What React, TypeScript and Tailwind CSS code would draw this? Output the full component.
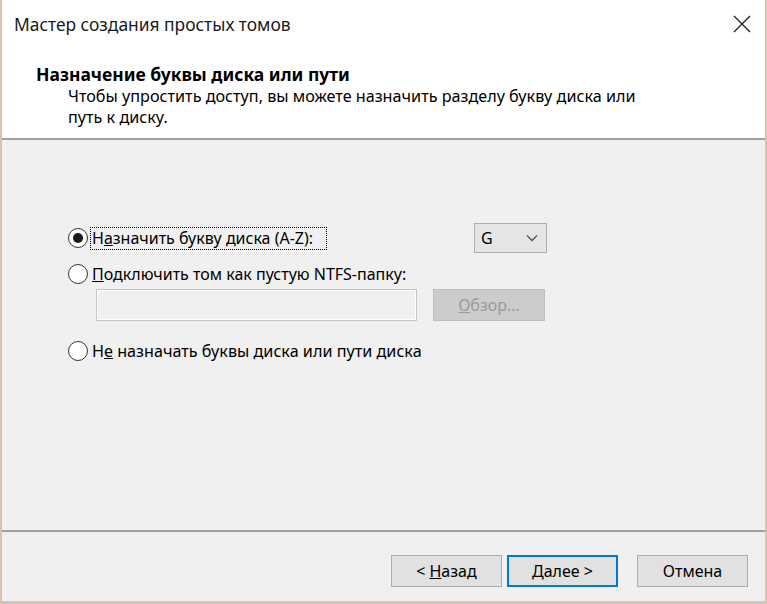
import React from 'react';

const font = { fontFamily: '"Noto Sans", "Open Sans", sans-serif' };

const Radio: React.FC<{ checked?: boolean }> = ({ checked }) => (
  <span className="w-[20px] h-[20px] rounded-full border-[1.5px] border-[#333333] bg-white flex items-center justify-center shrink-0">
    {checked && <span className="w-[10px] h-[10px] rounded-full bg-[#1a1a1a]" />}
  </span>
);

const Btn: React.FC<{ children: React.ReactNode; primary?: boolean; className?: string }> = ({ children, primary, className }) => (
  <button
    className={
      'h-[32px] w-[111px] bg-[#e1e1e1] text-[16px] text-black flex items-center justify-center ' +
      (primary ? 'border-2 border-[#0078d7]' : 'border border-[#adadad]') +
      ' ' + (className || '')
    }
  >
    {children}
  </button>
);

export default function App() {
  return (
    <div style={font} className="w-[767px] h-[604px] flex flex-col border-x-2 border-b-[3px] border-[#dcc1ab] bg-[#f0f0f0] text-black overflow-hidden">
      {/* header */}
      <div className="bg-white h-[138px] flex flex-col shrink-0">
        <div className="h-[48px] flex items-center justify-between pl-[12px] pr-[14px]">
          <span className="text-[17.4px] text-[#1a1a1a]">Мастер создания простых томов</span>
          <svg width="18" height="18" viewBox="0 0 18 18">
            <path d="M1 1 L17 17 M17 1 L1 17" stroke="#222" strokeWidth="1.3" />
          </svg>
        </div>
        <div className="pl-[34px] mt-[15px] text-[17.5px] font-bold leading-[22px]">Назначение буквы диска или пути</div>
        <div className="pl-[66px] mt-[1px] text-[16.2px] leading-[21px] w-[670px]">
          Чтобы упростить доступ, вы можете назначить разделу букву диска или путь к диску.
        </div>
      </div>
      <div className="h-[2px] bg-[#a0a0a0] shrink-0" />

      {/* body */}
      <div className="flex-1 flex flex-col pl-[66px] pt-[83px] text-[16px]">
        <div className="flex items-center h-[30px]">
          <Radio checked />
          <span className="ml-[2px] w-[237px] h-[23px] border border-dotted border-black flex items-center pl-[1px] leading-none">
            Н<u>а</u>значить букву диска (А-Z):
          </span>
          <div className="ml-[147px] w-[73px] h-[30px] bg-[#e5e5e5] border border-[#adadad] flex items-center justify-between pl-[6px] pr-[8px]">
            <span>G</span>
            <svg width="12" height="8" viewBox="0 0 12 8">
              <path d="M1 1.5 L6 6.5 L11 1.5" fill="none" stroke="#555" strokeWidth="1.3" />
            </svg>
          </div>
        </div>
        <div className="flex items-center h-[24px] mt-[9px] gap-[4px]">
          <Radio />
          <span><u>П</u>одключить том как пустую NTFS-папку:</span>
        </div>
        <div className="flex mt-[3px] ml-[28px] gap-[16px]">
          <div className="w-[321px] h-[32px] border border-[#c6c6c6] bg-[#f0f0f0] shadow-[inset_0_0_0_1px_#ffffff]" />
          <div className="w-[112px] h-[32px] bg-[#cccccc] border border-[#bfbfbf] text-[#9a9a9a] flex items-center justify-center">
            <span><u>О</u>бзор...</span>
          </div>
        </div>
        <div className="flex items-center h-[24px] mt-[18px] gap-[4px]">
          <Radio />
          <span className="text-[16.2px]">Н<u>е</u> назначать буквы диска или пути диска</span>
        </div>
      </div>

      <div className="h-[2px] bg-[#a0a0a0] shrink-0" />
      {/* footer */}
      <div className="h-[69px] shrink-0 flex items-start justify-end pt-[23px] pr-[17px]">
        <Btn>&lt; <u className="ml-[4px]">Н</u>азад</Btn>
        <Btn primary className="ml-[5px]"><u>Д</u>алее &gt;</Btn>
        <Btn className="ml-[19px]">Отмена</Btn>
      </div>
    </div>
  );
}
